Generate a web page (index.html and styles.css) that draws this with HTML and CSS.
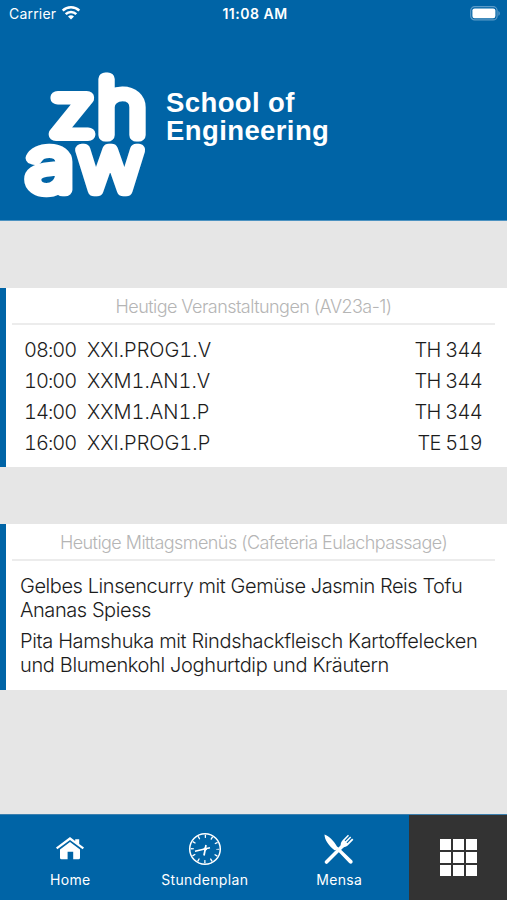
FILE: index.html
```html
<!DOCTYPE html>
<html lang="de">
<head>
    <meta charset="UTF-8">
    <meta name="viewport" content="width=device-width, initial-scale=1.0">
    <title>ZHAW School of Engineering</title>
    <link rel="stylesheet" href="styles.css">
</head>
<body>

<!-- Statusleiste und Logo -->
<header class="header">
    <div class="status">
        <div class="carrier">
            <span>Carrier</span>
            <svg width="20" height="16" viewBox="0 0 20 16" fill="none" stroke="#fff" stroke-width="2.5">
                <path d="M1.7 5.7a11.8 11.8 0 0 1 16.6 0"/>
                <path d="M4.7 9.1a7.5 7.5 0 0 1 10.6 0"/>
                <path d="M10 14.6 7 11.6a4.3 4.3 0 0 1 6 0z" fill="#fff" stroke="none"/>
            </svg>
        </div>
        <span class="clock">11:08 AM</span>
        <svg class="battery" width="31" height="15" viewBox="0 0 31 15">
            <rect x=".7" y=".7" width="26.4" height="13.2" rx="4" fill="none" stroke="#5b9bc8" stroke-width="1.2"/>
            <rect x="2.4" y="2.4" width="23" height="9.8" rx="2.2" fill="#fff"/>
            <path d="M28.4 4.9c1.9.8 1.9 4 0 4.8z" fill="#5b9bc8"/>
        </svg>
    </div>
    <div class="brand">
        <svg class="logo" width="124" height="130" viewBox="0 0 124 130">
            <text transform="translate(25.5 64.5) scale(1.23 1)">z</text>
            <text transform="translate(73.5 64.5) scale(1.2 1.1)">h</text>
            <text transform="translate(3 119.500) scale(1.26 1.050)">a</text>
            <text transform="translate(54.500 120) scale(1.120 1.050)">w</text>
        </svg>
        <h1>School of<br>Engineering</h1>
    </div>
</header>

<main>
    <!-- Veranstaltungen -->
    <section class="card events">
        <h2>Heutige Veranstaltungen (AV23a-1)</h2>
        <ul>
            <li><span class="time">08:00</span><span class="name">XXI.PROG1.V</span><span class="room">TH 344</span></li>
            <li><span class="time">10:00</span><span class="name">XXM1.AN1.V</span><span class="room">TH 344</span></li>
            <li><span class="time">14:00</span><span class="name">XXM1.AN1.P</span><span class="room">TH 344</span></li>
            <li><span class="time">16:00</span><span class="name">XXI.PROG1.P</span><span class="room">TE 519</span></li>
        </ul>
    </section>

    <!-- Mensa -->
    <section class="card menus">
        <h2>Heutige Mittagsmenüs (Cafeteria Eulachpassage)</h2>
        <p>Gelbes Linsencurry mit Gemüse Jasmin Reis Tofu<br>Ananas Spiess</p>
        <p class="second">Pita Hamshuka mit Rindshackfleisch Kartoffelecken<br>und Blumenkohl Joghurtdip und Kräutern</p>
    </section>
</main>

<nav class="tabs">
    <a class="tab">
        <svg width="34" height="34" viewBox="0 0 34 34" fill="#fff">
            <path d="M3 15.5 17 5l5.2 3.9V7.3h4v4.6l4.8 3.6-1.3 1.7L17 7.9 4.3 17.2z"/>
            <path d="M7 17.5 17 10l10 7.5v8.2a1.5 1.5 0 0 1-1.5 1.5h-5.3v-7.4h-5.6v7.4H8.5a1.5 1.5 0 0 1-1.5-1.5z"/>
        </svg>
        <span>Home</span>
    </a>
    <a class="tab">
        <svg width="34" height="34" viewBox="0 0 34 34" fill="none" stroke="#fff">
            <circle cx="17" cy="17" r="15.3" stroke-width="1.5"/>
            <circle cx="17" cy="17" r="12.7" stroke-width="3.2" stroke-dasharray="1.3 5.35" stroke-dashoffset=".65"/>
            <path d="M22 15.8 7 19.3" stroke-width="1.5"/>
            <path d="m18 13-2 10.5" stroke-width="1.7"/>
            <circle cx="17.3" cy="17" r="1.3" fill="#fff"/>
        </svg>
        <span>Stundenplan</span>
    </a>
    <a class="tab">
        <svg width="34" height="34" viewBox="0 0 34 34">
            <path d="M2.5 2.5C7 4 12 9 15 14.5l3 2.3 12 11.5c2 2.2-.8 4.7-2.8 2.7L14.5 17.7l-2 .6C7 14 2.5 8 2.5 2.5z" fill="#fff"/>
            <path d="M4.5 30 21 13.5" stroke="#fff" stroke-width="3.6" stroke-linecap="round"/>
            <path d="M19 15.5c-.9-3.5.1-5.8 1.8-7.500L26 2.800l1 1-4.400 4.600.8.8L28.200 4.500l1 1-4.700 4.900.8.8L30.100 6.500l1.300 1.300-4.900 5c-2 2-4.600 3-7.500 2.700z" fill="#fff"/>
        </svg>
        <span>Mensa</span>
    </a>
    <a class="more">
        <i></i><i></i><i></i>
        <i></i><i></i><i></i>
        <i></i><i></i><i></i>
    </a>
</nav>

</body>
</html>
```
FILE: styles.css
```css
* {
    box-sizing: border-box;
}

body {
    margin: 0;
    height: 900px;
    display: flex;
    flex-direction: column;
    background-color: #e6e6e6;
    color: #1c1c1c;
    font-family: Inter, "Liberation Sans", sans-serif;
    font-weight: 300;
}

h1, h2, p, ul {
    margin: 0;
    padding: 0;
}

/* Header */
.header {
    height: 221px;
    background-color: #0064a6;
    border-bottom: 1px solid #4c92c1;
    color: #fff;
}

.status {
    height: 28px;
    padding: 0 6px 0 9px;
    display: grid;
    grid-template-columns: 1fr auto 1fr;
    align-items: center;
    font-size: 14px;
    font-weight: 400;
}

.carrier {
    display: flex;
    align-items: center;
    gap: 5px;
    margin-top: -1px;
    letter-spacing: 0.2px;
}

.carrier svg {
    margin-top: -1px;
}

.clock {
    margin-top: -1px;
    font-weight: 600;
    letter-spacing: 0.5px;
}

.battery {
    justify-self: end;
    margin-top: -1px;
}

.brand {
    display: flex;
    padding: 42px 0 0 24px;
    gap: 18px;
}

.logo {
    overflow: visible;
}

.logo text {
    font-family: Inter, sans-serif;
    font-weight: 100;
    font-size: 70px;
    fill: #fff;
    stroke: #fff;
    stroke-width: 12px;
    stroke-linejoin: round;
}

.brand h1 {
    margin-top: 19px;
    font-family: "Liberation Sans", sans-serif;
    font-size: 27.5px;
    font-weight: 700;
    line-height: 28px;
    letter-spacing: 0.4px;
}

/* Karten */
.card {
    background-color: #fff;
    border-left: 6px solid #0064a6;
}

.card h2 {
    margin: 0 12px 0 6px;
    height: 37px;
    border-bottom: 2px solid #ececec;
    text-align: center;
    font-size: 18px;
    font-weight: 300;
    line-height: 38px;
    letter-spacing: -0.55px;
    color: #b5b5b5;
    white-space: nowrap;
}

.events {
    margin-top: 67px;
    height: 179px;
}

.events ul {
    list-style: none;
    padding: 10px 25px 0 18px;
}

.events li {
    display: flex;
    font-size: 20px;
    line-height: 31px;
    letter-spacing: -0.7px;
    font-variant-numeric: tabular-nums;
}

.time {
    width: 63px;
    letter-spacing: -1px;
}

.name {
    letter-spacing: 0;
}

.room {
    margin-left: auto;
}

.menus {
    margin-top: 57px;
    height: 166px;
}

.menus p {
    padding: 0 0 7px 14px;
    font-size: 20px;
    line-height: 24px;
    letter-spacing: -0.43px;
    white-space: nowrap;
}

.menus h2 + p {
    padding-top: 13px;
}

.menus .second {
    letter-spacing: -0.36px;
}

/* Tab-Leiste */
.tabs {
    margin-top: auto;
    height: 86px;
    padding-left: 3px;
    display: flex;
    background-color: #0064a6;
    border-top: 1px solid #3b7fae;
    color: #fff;
}

.tab {
    width: 134.5px;
    display: flex;
    flex-direction: column;
    align-items: center;
    padding-top: 17px;
    font-size: 14px;
    font-weight: 400;
    line-height: 18px;
    letter-spacing: 0.35px;
}

.tab span {
    margin-top: 5px;
}

.more {
    flex: 1;
    margin-left: 2.5px;
    display: grid;
    grid-template-columns: repeat(3, 11px);
    grid-template-rows: repeat(3, 11px);
    gap: 2px;
    place-content: center;
    background-color: #333;
}

.more i {
    background-color: #fff;
}
```
